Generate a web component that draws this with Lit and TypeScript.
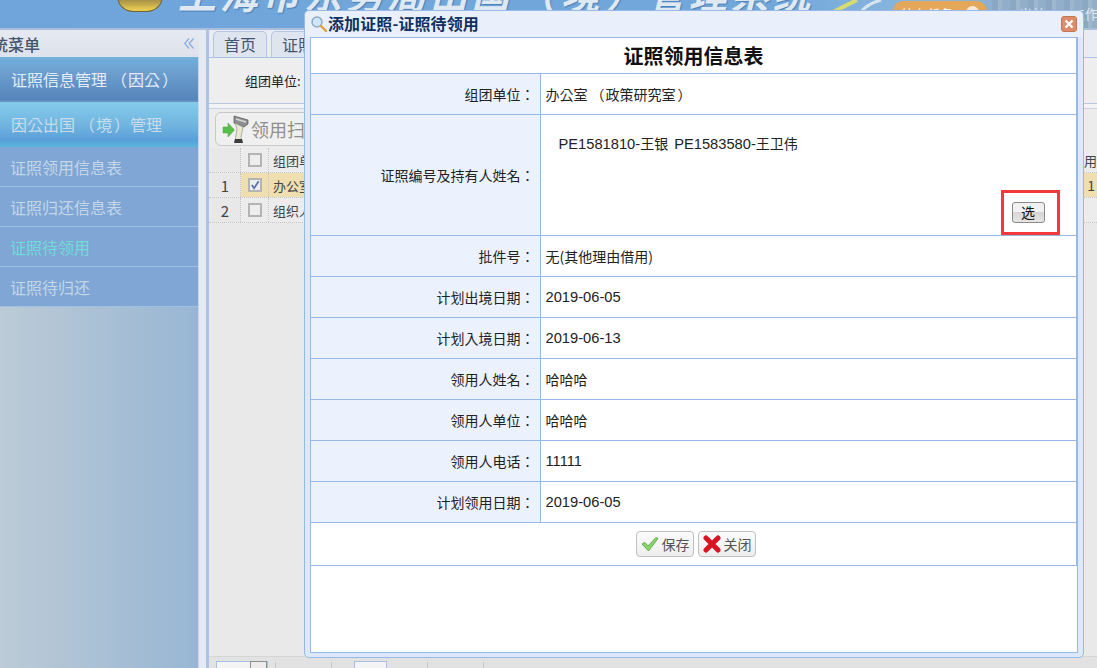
import { LitElement, html, css, svg } from "lit";
import { customElement } from "lit/decorators.js";

const ROWS: [string, string, boolean][] = [
  ["批件号：", "无(其他理由借用)", false],
  ["计划出境日期：", "2019-06-05", true],
  ["计划入境日期：", "2019-06-13", true],
  ["领用人姓名：", "哈哈哈", false],
  ["领用人单位：", "哈哈哈", false],
  ["领用人电话：", "11111", true],
  ["计划领用日期：", "2019-06-05", true],
];

@customElement("app-root")
export class AppRoot extends LitElement {
  static styles = css`
    :host {
      display: block;
      position: relative;
      width: 1097px;
      height: 668px;
      overflow: hidden;
      font-family: "Noto Sans CJK SC", "Liberation Sans", sans-serif;
      font-size: 14px;
      color: #222;
      background: #e9e9e9;
      text-spacing-trim: space-all;
    }
    .pl { margin-left: 3px; margin-right: 1px; }
    .pr { margin-left: 2px; }
    .page { display: grid; grid-template-rows: 30px 1fr; height: 668px; }
    .banner {
      position: relative;
      overflow: hidden;
      background: linear-gradient(90deg, #6fa5da 0%, #72a7db 70%, #86b4dc 82%, #8fb0cc 92%, #8aa8c4 100%);
      border-bottom: 2px solid #a9bedc;
      box-sizing: border-box;
    }
    .city {
      position: absolute; right: 0; top: 0; bottom: 0; width: 105px;
      background: repeating-linear-gradient(90deg, #8aa8c4 0 6px, #9db7ce 6px 10px, #93aec9 10px 18px);
    }
    .emblem {
      position: absolute; left: 117px; top: -14px; width: 46px; height: 26px; box-sizing: border-box;
      border-radius: 8px 8px 16px 16px;
      background: linear-gradient(180deg, #a08a4a 50%, #bda44a 70%, #e6c950 92%);
      border: 1px solid #6f6238;
      border-top: none;
    }
    .sys {
      position: absolute; left: 178px; top: -27px;
      font-family: "Noto Sans CJK KR", sans-serif;
      font-size: 38px; font-weight: 700; font-style: italic; white-space: nowrap; line-height: 40px;
      color: #dfe9f2; letter-spacing: 3.9px; text-shadow: 1px 1px 1px #4d7fb5;
    }
    .sys .pl { margin-left: 4px; margin-right: 2px; }
    .sys .pr { margin-left: 2px; }
    .arc { position: absolute; left: 825px; top: 0; }
    .task {
      position: absolute; left: 893px; top: 1px; width: 94px; height: 20px; border-radius: 10px;
      background: #e5a85a; color: #fff; font-size: 13px; line-height: 20px; padding: 3px 0 0 8px; box-sizing: border-box;
    }
    .task i { position: absolute; right: 8px; top: 5px; width: 13px; height: 13px; border-radius: 50%; background: #f4ead8; }
    .links { position: absolute; right: -1px; top: 4px; font-size: 13px; color: #dfeaf3; white-space: nowrap; word-spacing: 24px; }
    .body { display: grid; grid-template-columns: 199px 10px 1fr; min-height: 0; }
    .side {
      display: flex; flex-direction: column;
      background: linear-gradient(90deg, #bccbd6, #98b6d4);
      border-right: 1px solid #c6d4e8;
      box-sizing: border-box;
    }
    .side-head {
      height: 27px; flex: none; display: flex; align-items: center; justify-content: space-between;
      background: linear-gradient(180deg, #e6e9f1, #dde2ec);
      color: #44566f; font-size: 16px; font-weight: 500; padding-right: 5px; overflow: hidden;
      margin-right: -1px;
    }
    .side-head span { margin-left: -8px; }
    .m1, .m2 {
      flex: none; color: #e2ecf4; font-size: 16px; padding-left: 11px; display: flex; align-items: center; white-space: pre;
      font-family: "Noto Sans CJK KR", sans-serif;
    }
    .m1 .pl, .m2 .pl { margin-left: 4px; margin-right: 1px; }
    .m1 { height: 45px; background: linear-gradient(180deg, #72b0dc 0%, #6b9ccd 40%, #5585bb 95%, #7399c4 100%); padding-bottom: 1px; box-sizing: border-box; }
    .m2 { height: 45px; background: linear-gradient(180deg, #84cbeb 0%, #72b5e0 50%, #5a9fd9 85%, #5ab8dc 100%); color: #c7dcec; padding-bottom: 1px; box-sizing: border-box; }
    .m3 {
      flex: none; height: 40px; box-sizing: border-box; padding-left: 10px; display: flex; align-items: center;
      background: #7fa6d4; border-bottom: 1px solid #a1bfdf; color: #c4d6e8; font-size: 16px;
    }
    .m3.on { color: #70dcd9; }
    .split { background: #e6ebf3; border-right: 3px solid #adc3e5; box-sizing: border-box; }
    .main { display: flex; flex-direction: column; min-width: 0; overflow: hidden; background: #e9e9e9; }
    .tabs { height: 28px; flex: none; display: flex; gap: 4px; padding-left: 4px; align-items: flex-end; background: #e9ecf3; border-bottom: 1px solid #adc3e5; box-sizing: border-box; }
    .tab {
      height: 26px; padding: 0 10px; border: 1px solid #b3c6e4; border-bottom: none; border-radius: 5px 5px 0 0;
      background: #dfe5ef; color: #44566f; font-size: 16px; line-height: 25px; box-sizing: border-box;
    }
    .search { height: 46px; flex: none; background: #eee; border-bottom: 1px solid #b9c9e3; padding-left: 36px; display: flex; align-items: center; font-size: 13px; box-sizing: border-box; }
    .gap { height: 5px; flex: none; background: #f3f3f3; border-bottom: 1px solid #c6d2e6; box-sizing: border-box; }
    .tool { height: 39px; flex: none; padding: 3px 0 0 6px; box-sizing: border-box; background: #ececec; }
    .scan {
      width: 200px; height: 34px; box-sizing: border-box; border: 1px solid #c8c8c8; border-radius: 6px;
      display: flex; align-items: center; gap: 2px; padding-left: 6px; color: #8f8f8f; font-size: 18px;
      background: #f0f0f0;
    }
    .grid { flex: none; font-size: 13px; background: #ececec; }
    .gr { display: grid; grid-template-columns: 31px 28px 1fr; height: 25px; border-bottom: 1px dotted #c5c5c5; align-items: center; box-sizing: border-box; padding-left: 1px; }
    .gr > * { display: flex; align-items: center; height: 100%; }
    .gr .n { justify-content: center; font-size: 15px; color: #444; background: #e8e8e8; border-right: 1px dotted #c5c5c5; box-sizing: border-box; }
    .gr .c { justify-content: center; border-right: 1px dotted #c5c5c5; box-sizing: border-box; }
    .gr .t { padding-left: 4px; color: #444; }
    .gr.sel .c, .gr.sel .t { background: #efdfb0; }
    .gr.sel .t { justify-content: space-between; }
    .gr.sel .t b { font-weight: 400; font-size: 14px; margin-right: 2px; }
    .gr.head .t { justify-content: space-between; }
    .box { width: 10px; height: 10px; border: 2px solid #b4b4b4; background: #eee; box-sizing: content-box; position: relative; }
    .spacer { flex: 1; background: #e9e9e9; }
    .pager {
      height: 12px; flex: none; background: #e2e2e2; border-top: 1px solid #d6d6d6; position: relative; box-sizing: border-box;
    }
    .pager i { position: absolute; top: 4px; height: 8px; border: 1px solid #a8c0e4; border-bottom: none; box-sizing: border-box; background: #f4f4f4; }
    .pager b { position: absolute; top: 4px; height: 8px; width: 17px; border: 1px solid #8f8f8f; border-bottom: none; box-sizing: border-box; background: #ececec; }
    .pager u { position: absolute; top: 5px; width: 1px; height: 7px; background: #c8c8c8; }

    .dialog {
      position: absolute; left: 304px; top: 10px; width: 780px; height: 648px; box-sizing: border-box;
      background: #dde9fb; border: 1px solid #98b9e6; border-radius: 5px;
      padding: 0 5px 4px 5px; display: flex; flex-direction: column;
    }
    .dlg-top {
      margin: 0 -5px; padding: 0 5px; height: 26px; flex: none; display: flex; align-items: center;
      background: #e9f0fc; border-radius: 5px 5px 0 0; position: relative;
    }
    .dlg-title { color: #12305f; font-size: 16px; font-weight: 700; line-height: 24px; letter-spacing: .1px; padding-bottom: 2px; }
    .x {
      position: absolute; right: 6px; top: 5px; width: 16px; height: 16px; box-sizing: border-box; border-radius: 3px;
      background: #dd8b6b; border: 1px solid #c47757; display: flex; align-items: center; justify-content: center;
    }
    .dlg-body {
      flex: 1; min-height: 0; background: #fff; border: 1px solid #98b9e6;
    }
    table { width: 766px; border-collapse: collapse; table-layout: fixed; font-size: 14px; color: #222; }
    col.l { width: 229px; }
    td { border: 1px solid #98b9e6; height: 41px; padding: 0; box-sizing: border-box; }
    tr:first-child td { border-top: none; }
    td:first-child { border-left: none; }
    td.k { background: #ebf2fe; text-align: right; padding-right: 5px; font-family: "Noto Sans CJK TC", sans-serif; }
    td.v { padding-left: 5px; background: #fff; }
    td.v.tc { font-family: "Noto Sans CJK KR", sans-serif; }
    .num, td.v.num { font-family: "Liberation Sans", sans-serif; font-size: 14.7px; }
    td.v.num { padding-top: 1px; }
    td.cap { height: 35px; padding-top: 1px; text-align: center; font-size: 20px; font-weight: 700; color: #111; }
    tr.tall td { height: 121px; }
    .cert { position: relative; height: 120px; }
    .cert p { margin: 0; position: absolute; left: 18px; top: 18px; white-space: nowrap; display: flex; gap: 6px; line-height: 20px; }
    .pick-frame { position: absolute; left: 460px; top: 75px; width: 59px; height: 45px; box-sizing: border-box; border: 3px solid #f33a3a; display: flex; align-items: center; justify-content: center; padding-right: 4px; }
    .pick { width: 33px; height: 21px; box-sizing: border-box; border: 1px solid #8a8a8a; border-radius: 3px; font-size: 14px; line-height: 18px; text-align: center; color: #111;
      background: linear-gradient(180deg, #f1f1f1 0 50%, #d6d6d6 50%, #e6e6e6); }
    td.act { height: 43px; text-align: center; }
    .acts { display: flex; justify-content: center; gap: 4px; padding-left: 5px; }
    .btn { height: 26px; width: 58px; box-sizing: border-box; border: 1px solid #c0c0c0; border-radius: 4px; display: flex; align-items: center; justify-content: center; gap: 3px; background: linear-gradient(180deg, #fbfbfb, #eeeeee); color: #555; font-size: 14px; }
  `;

  private check() {
    return svg`<svg width="10" height="10" viewBox="0 0 11 11" style="position:absolute;left:0;top:0"><path d="M2 5.5 L4.5 9 L9.5 1.5" fill="none" stroke="#5a6fb0" stroke-width="2"/></svg>`;
  }

  render() {
    return html`
      <div class="page">
        <div class="banner">
          <div class="city"></div>
          <div class="emblem"></div>
          <div class="sys">上海市东务局出国<span class="pl">（</span>境<span class="pr">）</span>管理系统</div>
          <svg class="arc" width="60" height="12" viewBox="0 0 60 12"><path d="M8 12 Q24 4 32 0" stroke="#d8dc70" stroke-width="4" fill="none"/><path d="M36 12 Q42 4 56 0" stroke="#d9e5ee" stroke-width="3" fill="none"/></svg>
          <div class="task">待办任务<i></i></div>
          <div class="links">当前 工作</div>
        </div>
        <div class="body">
          <aside class="side">
            <div class="side-head"><span>统菜单</span>
              <svg width="10" height="11" viewBox="0 0 10 11"><path d="M5 .5 L.7 5.5 L5 10.5 M9.5 .5 L5.2 5.5 L9.5 10.5" fill="none" stroke="#86aadc" stroke-width="1.2"/></svg>
            </div>
            <div class="m1"><span>证照信息管理<span class="pl">（</span>因公<span class="pr">）</span></span></div>
            <div class="m2"><span>因公出国<span class="pl">（</span>境<span class="pr">）</span>管理</span></div>
            <div class="m3">证照领用信息表</div>
            <div class="m3">证照归还信息表</div>
            <div class="m3 on">证照待领用</div>
            <div class="m3">证照待归还</div>
          </aside>
          <div class="split"></div>
          <main class="main">
            <div class="tabs"><div class="tab">首页</div><div class="tab">证照待领用</div></div>
            <div class="search">组团单位:</div>
            <div class="gap"></div>
            <div class="tool">
              <div class="scan">
                <svg width="27" height="29" viewBox="0 0 27 29">
                  <path d="M12 1 L26 5 L26 9 L22 12 L12 8 Z" fill="#8e8e8e" stroke="#555" stroke-width=".7"/>
                  <path d="M14 4 L24 7" stroke="#d8d8d8" stroke-width="1.4"/>
                  <path d="M13 8 L21 12 L19 22 L20 27 L13 27 L14 20 L15 14 Z" fill="#e9e6d2" stroke="#8a8a7a" stroke-width=".6"/>
                  <path d="M13 24 L20 24 L21 28 L12 28 Z" fill="#3c3c3c"/>
                  <path d="M1 12 H6 V8 L12.5 15 L6 22 V18 H1 Z" fill="#58c04a" stroke="#4aa63e" stroke-width=".5"/>
                </svg>
                <span>领用扫描</span>
              </div>
            </div>
            <div class="grid">
              <div class="gr head"><span class="n"></span><span class="c"><span class="box"></span></span><span class="t"><span>组团单位</span><span>领用</span></span></div>
              <div class="gr sel"><span class="n">1</span><span class="c"><span class="box">${this.check()}</span></span><span class="t"><span>办公室</span><b>1</b></span></div>
              <div class="gr"><span class="n">2</span><span class="c"><span class="box"></span></span><span class="t">组织人事处</span></div>
            </div>
            <div class="spacer"></div>
            <div class="pager">
              <i style="left:7px;width:52px"></i>
              <b style="left:41px"></b>
              <i style="left:145px;width:33px"></i>
              <u style="left:66px"></u><u style="left:122px"></u><u style="left:218px"></u><u style="left:274px"></u>
            </div>
          </main>
        </div>
      </div>

      <div class="dialog">
        <div class="dlg-top">
          <svg width="18" height="18" viewBox="0 0 18 18">
            <circle cx="7" cy="7" r="5" fill="#cfe6fa" stroke="#8fa9c4" stroke-width="1.4"/>
            <path d="M11 11 L16 16" stroke="#e0a040" stroke-width="2.4" stroke-linecap="round"/>
          </svg>
          <span class="dlg-title">添加证照-证照待领用</span>
          <span class="x"><svg width="10" height="10" viewBox="0 0 10 10"><path d="M1.5 1.5 L8.5 8.5 M8.5 1.5 L1.5 8.5" stroke="#fff" stroke-width="2.4"/></svg></span>
        </div>
        <div class="dlg-body">
          <table>
            <colgroup><col class="l" /><col /></colgroup>
            <tr><td class="cap" colspan="2">证照领用信息表</td></tr>
            <tr><td class="k">组团单位：</td><td class="v tc">办公室<span class="pl">（</span>政策研究室<span class="pr">）</span></td></tr>
            <tr class="tall"><td class="k">证照编号及持有人姓名：</td>
              <td class="v" style="padding:0"><div class="cert">
                <p><span><span class="num">PE1581810-</span>王银</span><span><span class="num">PE1583580-</span>王卫伟</span></p>
                <div class="pick-frame"><div class="pick">选</div></div></div></td></tr>
            ${ROWS.map(([k, v, n]) => html`<tr><td class="k">${k}</td><td class="v ${n ? "num" : ""}">${v}</td></tr>`)}
            <tr><td class="act" colspan="2"><div class="acts">
              <div class="btn"><svg width="18" height="16" viewBox="0 0 18 16"><path d="M1 8 L4 6.5 L7 10 L15 1.5 L17 2.5 L7.5 15 Z" fill="#8bd66a" stroke="#4f9a3c" stroke-width=".8"/></svg>保存</div>
              <div class="btn"><svg width="18" height="18" viewBox="0 0 18 18"><path d="M3 3 L15 15 M15 3 L3 15" stroke="#d81420" stroke-width="5" stroke-linecap="round"/></svg>关闭</div>
            </div></td></tr>
          </table>
        </div>
      </div>
    `;
  }
}
